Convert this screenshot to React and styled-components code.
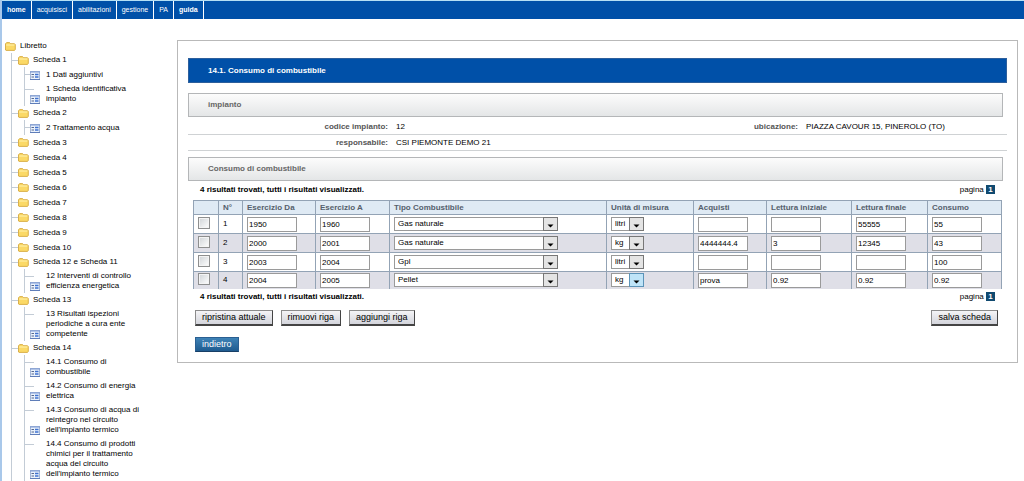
import React from "react";
import styled, { createGlobalStyle, css } from "styled-components";

const GlobalStyle = createGlobalStyle`
  * {
    box-sizing: border-box;
  }

  body {
    margin: 0;
    background: #fff;
    color: #000;
    font-family: "Liberation Sans", Arial, sans-serif;
    font-size: 8px;
    line-height: 10px;
  }
`;

const Page = styled.div`
  min-height: 100vh;
  border-left: 2px solid #a9c8ea;
`;

const NavBar = styled.nav`
  display: flex;
  height: 19px;
  border-top: 1px solid #b5e0f5;
  background: #0050a8;
`;

const NavLink = styled.a`
  display: flex;
  align-items: center;
  padding: 0 5px;
  border-right: 1px solid #fff;
  color: #fff;
  font-size: 7px;
  font-weight: ${({ $strong }) => ($strong ? "bold" : "normal")};
  text-decoration: none;
`;

const Columns = styled.div`
  display: grid;
  grid-template-columns: 175px minmax(0, 1fr);
  align-items: start;
  padding: 20px 6px 0 0;
`;

// Navigation tree
const Tree = styled.nav`
  padding: 0 32px 0 3px;
`;

const Branch = styled.ul`
  margin: 0;
  padding: 0 0 0 13px;
  list-style: none;
  background: linear-gradient(#c3ccd6, #c3ccd6) 6px 0 / 1px 100% no-repeat;
`;

const FolderLink = styled.a`
  display: flex;
  align-items: center;
  gap: 4px;
  height: ${({ $open }) => ($open ? 14 : 15)}px;
  color: #000;
  text-decoration: none;

  ${({ $child }) =>
    $child &&
    css`
      margin-left: -6px;
      &::before {
        content: "";
        width: 6px;
        margin-right: -4px;
        border-top: 1px solid #c3ccd6;
      }
    `}
`;

const LeafLink = styled.a`
  display: flex;
  align-items: flex-end;
  gap: 6px;
  min-height: 15px;
  margin-left: -6px;
  padding: 2px 0;
  color: #000;
  text-decoration: none;
  background: linear-gradient(#c3ccd6, #c3ccd6) 0 7px / 9px 1px no-repeat;

  svg {
    flex-shrink: 0;
    margin-left: 5px;
  }
`;

const FolderIcon = () => (
  <svg width="11" height="9" viewBox="0 0 11 9" aria-hidden="true">
    <path d="M.5 8V1.8L1.6.6h3l1 1.1h3.9l.8.8V7.4l-.8 1H1z" fill="#fbd966" stroke="#d0a132" strokeWidth=".8" />
    <path d="M1.2 3h8.2" stroke="#fff3b0" strokeWidth="1" />
  </svg>
);

const FormIcon = () => (
  <svg width="10" height="9" viewBox="0 0 10 9" aria-hidden="true">
    <rect x=".5" y=".5" width="9" height="8" fill="#eaf2fc" stroke="#a4b6d6" />
    <path d="M0 1h10" stroke="#7896d2" strokeWidth="1" />
    <path d="M1.5 3.5h2.5M1.5 6h2.5" stroke="#55678f" />
    <path d="M5 3.5h3.5M5 6h3.5" stroke="#3f72cf" strokeWidth="1.4" />
    <path d="M0 8.5h10" stroke="#5f7db8" />
  </svg>
);

// Content panel
const Panel = styled.main`
  margin-top: 1px;
  padding: 17px 10px 10px;
  border: 1px solid #b9b9b9;
`;

const PageTitle = styled.h1`
  margin: 0 0 10px;
  padding: 0 19px;
  border: 1px solid #2d5f9c;
  background: #0050a8;
  color: #fff;
  font-size: 8px;
  line-height: 23px;
`;

const SectionTitle = styled.h2`
  margin: 0 4px 0 0;
  padding: 0 19px;
  border: 1px solid #b4b6b8;
  background: linear-gradient(#fcfcfc, #e4e6e7);
  color: #666;
  font-size: 8px;
  line-height: 22px;
`;

const Details = styled.dl`
  margin: 2px 0 6px;
`;

const DetailRow = styled.div`
  display: grid;
  grid-template-columns: 200px 1fr 201px 201px;
  column-gap: 8px;
  height: 16px;
  padding-top: 1px;
  align-items: center;
  border-bottom: 1px solid #cfd2d4;
`;

const Term = styled.dt`
  color: #555;
  font-weight: bold;
  text-align: right;
`;

const Value = styled.dd`
  margin: 0;
`;

const Results = styled.div`
  display: flex;
  justify-content: space-between;
  align-items: center;
  height: 19px;
  padding: 0 12px 2px;
`;

const Pager = styled.span`
  b {
    display: inline-block;
    width: 9px;
    background: #114a70;
    color: #fff;
    line-height: 9px;
    text-align: center;
  }
`;

const Table = styled.table`
  width: calc(100% - 10px);
  margin-left: 5px;
  border-collapse: collapse;
  table-layout: fixed;
  border: 1px solid #93a3b5;
  border-bottom: 0;

  th,
  td {
    height: 19px;
    padding: 0 0 0 4px;
    border: 1px solid #93a3b5;
    text-align: left;
    vertical-align: middle;
  }

  th {
    height: 14px;
    background: #dfeaf4;
    color: #555f6c;
  }

  tbody tr:nth-child(even) {
    background: #dfdfe7;
  }

  tbody tr:last-child td {
    height: 17px;
    border-bottom: 0;
  }
`;

const Check = styled.input`
  appearance: none;
  display: block;
  width: 12px;
  height: 12px;
  margin: 0 0 2px;
  border: 1px solid #8e8f8f;
  background: linear-gradient(135deg, #cfd3d6, #fff);
  box-shadow: inset 0 0 0 1px #f4f4f4;
`;

const Field = styled.input`
  display: block;
  width: 50px;
  height: 15px;
  padding: 0 1px;
  border: 1px solid #9a9a9a;
  border-radius: 0;
  background: #fff;
  font: inherit;
`;

const SelectBox = styled.span`
  display: flex;
  position: relative;
  width: ${({ $wide }) => ($wide ? 164 : 33)}px;
  height: 14px;

  svg {
    position: absolute;
    right: 0;
    top: 0;
    pointer-events: none;
  }
`;

const Select = styled.select`
  appearance: none;
  width: 100%;
  height: 100%;
  padding: 0 16px 0 3px;
  border: 1px solid #9a9a9a;
  border-radius: 0;
  background: #fff;
  color: #000;
  font: inherit;
`;

const Actions = styled.div`
  display: flex;
  gap: 8px;
  padding: 2px 9px 0 7px;

  & + & {
    padding-top: 11px;
  }
`;

const Button = styled.button`
  height: 16px;
  padding: 0 6px;
  border: 1px solid #8b8b8b;
  border-right-color: #444;
  border-bottom: 2px solid #444;
  background: linear-gradient(#f4f4f6, #d4d5dc);
  color: #000;
  font: inherit;
  font-size: 9px;
  line-height: 10px;

  &:last-child:not(:first-child) {
    margin-left: auto;
  }
`;

const BackButton = styled(Button)`
  height: 15px;
  border: 1px solid #2a5f92;
  border-bottom-color: #173f66;
  background: linear-gradient(#3e82b6, #1f5b8f);
  color: #fff;
`;

const menu = ["home", "acquisisci", "abilitazioni", "gestione", "PA", "guida"];

const folders = [
  { name: "Scheda 1", items: ["1 Dati aggiuntivi", "1 Scheda identificativa impianto"] },
  { name: "Scheda 2", items: ["2 Trattamento acqua"] },
  { name: "Scheda 3" },
  { name: "Scheda 4" },
  { name: "Scheda 5" },
  { name: "Scheda 6" },
  { name: "Scheda 7" },
  { name: "Scheda 8" },
  { name: "Scheda 9" },
  { name: "Scheda 10" },
  { name: "Scheda 12 e Scheda 11", items: ["12 Interventi di controllo efficienza energetica"] },
  { name: "Scheda 13", items: ["13 Risultati ispezioni periodiche a cura ente competente"] },
  {
    name: "Scheda 14",
    items: [
      "14.1 Consumo di combustibile",
      "14.2 Consumo di energia elettrica",
      "14.3 Consumo di acqua di reintegro nel circuito dell'impianto termico",
      "14.4 Consumo di prodotti chimici per il trattamento acqua del circuito dell'impianto termico",
    ],
  },
];

const columns = [
  { label: "", width: 25 },
  { label: "N°", width: 24 },
  { label: "Esercizio Da", width: 73 },
  { label: "Esercizio A", width: 74 },
  { label: "Tipo Combustibile" },
  { label: "Unità di misura", width: 87 },
  { label: "Acquisti", width: 73 },
  { label: "Lettura iniziale", width: 85 },
  { label: "Lettura finale", width: 76 },
  { label: "Consumo", width: 74 },
];

const rows = [
  { from: "1950", to: "1960", fuel: "Gas naturale", unit: "litri", values: ["", "", "55555", "55"] },
  { from: "2000", to: "2001", fuel: "Gas naturale", unit: "kg", values: ["4444444.4", "3", "12345", "43"] },
  { from: "2003", to: "2004", fuel: "Gpl", unit: "litri", values: ["", "", "", "100"] },
  { from: "2004", to: "2005", fuel: "Pellet", unit: "kg", values: ["prova", "0.92", "0.92", "0.92"], active: true },
];

const DropDown = ({ label, value, options, wide, active }) => (
  <SelectBox $wide={wide}>
    <Select aria-label={label} defaultValue={value}>
      {options.map((option) => (
        <option key={option}>{option}</option>
      ))}
    </Select>
    <svg width="15" height="14" viewBox="0 0 15 14" aria-hidden="true">
      <rect x=".5" y=".5" width="14" height="13" fill={active ? "#bfe4f8" : "#e4e4e4"} stroke={active ? "#5b93b8" : "#777"} />
      <path d="M4.5 7.5h6l-3 3z" fill="#000" />
    </svg>
  </SelectBox>
);

const ResultCount = () => (
  <Results>
    <b>4 risultati trovati, tutti i risultati visualizzati.</b>
    <Pager>
      pagina <b>1</b>
    </Pager>
  </Results>
);

const App = () => (
  <Page>
    <GlobalStyle />
    <NavBar>
      {menu.map((item) => (
        <NavLink key={item} href="#" $strong={item === "home" || item === "guida"}>
          {item}
        </NavLink>
      ))}
    </NavBar>
    <Columns>
      <Tree>
        <FolderLink href="#" $open>
          <FolderIcon />
          Libretto
        </FolderLink>
        <Branch>
          {folders.map(({ name, items }) => (
            <li key={name}>
              <FolderLink href="#" $open={!!items} $child>
                <FolderIcon />
                {name}
              </FolderLink>
              {items && (
                <Branch>
                  {items.map((item) => (
                    <li key={item}>
                      <LeafLink href="#">
                        <FormIcon />
                        {item}
                      </LeafLink>
                    </li>
                  ))}
                </Branch>
              )}
            </li>
          ))}
        </Branch>
      </Tree>
      <Panel>
        <PageTitle>14.1. Consumo di combustibile</PageTitle>
        <SectionTitle>impianto</SectionTitle>
        <Details>
          <DetailRow>
            <Term>codice impianto:</Term>
            <Value>12</Value>
            <Term>ubicazione:</Term>
            <Value>PIAZZA CAVOUR 15, PINEROLO (TO)</Value>
          </DetailRow>
          <DetailRow>
            <Term>responsabile:</Term>
            <Value>CSI PIEMONTE DEMO 21</Value>
          </DetailRow>
        </Details>
        <SectionTitle>Consumo di combustibile</SectionTitle>
        <ResultCount />
        <Table>
          <colgroup>
            {columns.map(({ label, width }) => (
              <col key={label} width={width} />
            ))}
          </colgroup>
          <thead>
            <tr>
              {columns.map(({ label }) => (
                <th key={label}>{label}</th>
              ))}
            </tr>
          </thead>
          <tbody>
            {rows.map(({ from, to, fuel, unit, values, active }, index) => (
              <tr key={from}>
                <td>
                  <Check type="checkbox" aria-label={`Riga ${index + 1}`} />
                </td>
                <td>{index + 1}</td>
                <td>
                  <Field aria-label="Esercizio Da" defaultValue={from} />
                </td>
                <td>
                  <Field aria-label="Esercizio A" defaultValue={to} />
                </td>
                <td>
                  <DropDown label="Tipo Combustibile" value={fuel} options={["Gas naturale", "Gpl", "Pellet"]} wide />
                </td>
                <td>
                  <DropDown label="Unità di misura" value={unit} options={["litri", "kg"]} active={active} />
                </td>
                {values.map((value, i) => (
                  <td key={columns[i + 6].label}>
                    <Field aria-label={columns[i + 6].label} defaultValue={value} />
                  </td>
                ))}
              </tr>
            ))}
          </tbody>
        </Table>
        <ResultCount />
        <Actions>
          <Button type="button">ripristina attuale</Button>
          <Button type="button">rimuovi riga</Button>
          <Button type="button">aggiungi riga</Button>
          <Button type="submit">salva scheda</Button>
        </Actions>
        <Actions>
          <BackButton type="button">indietro</BackButton>
        </Actions>
      </Panel>
    </Columns>
  </Page>
);

export default App;
